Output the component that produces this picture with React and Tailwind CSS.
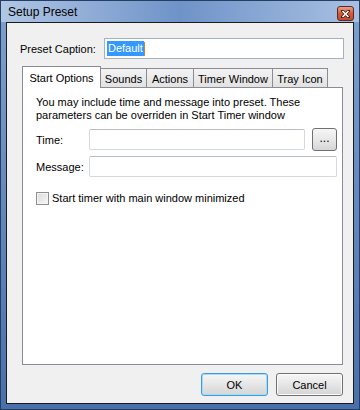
const font = { fontFamily: '"Liberation Sans", Arial, sans-serif' };

function Tab({ label, width, active }) {
  if (active) {
    return (
      <div
        className={`${width} h-[22px] -mb-px mr-[-1px] relative z-10 bg-white border border-b-0 border-[#898c95] flex items-start justify-center pt-[4px] text-[11px] leading-[14px] text-black whitespace-nowrap`}
      >
        {label}
      </div>
    );
  }
  return (
    <div
      className={`${width} h-[19px] mr-[-1px] border border-b-0 border-[#898c95] bg-linear-to-b from-[#f3f3f3] to-[#e2e2e2] flex items-start justify-center pt-[3px] text-[11px] leading-[14px] text-black whitespace-nowrap`}
    >
      {label}
    </div>
  );
}

function WinButton({ children, primary }) {
  return (
    <button
      className={`w-[67px] h-[23px] rounded-[3px] border text-[11px] leading-[14px] text-black bg-linear-to-b from-[#f6f6f6] via-[#e6e6e6] to-[#d4d4d4] ${
        primary ? "border-[#3c9ddb] shadow-[inset_0_0_0_1px_#a9dbf6]" : "border-[#707070] shadow-[inset_0_0_0_1px_#fbfbfb]"
      }`}
    >
      {children}
    </button>
  );
}

export default function App() {
  return (
    <div
      className="w-[360px] h-[410px] border border-[#253e63] bg-[#4f73ac] flex flex-col text-[11px]"
      style={font}
    >
      {/* Title bar */}
      <div className="h-[21px] shrink-0 flex items-center justify-between pl-[7px] pr-[5px] bg-linear-to-r from-[#b0c6e4] via-[#6f93c8] to-[#a8c0e2]">
        <span className="text-[12px] leading-[15px] text-black pt-[2px]">Setup Preset</span>
        <div className="w-[17px] h-[15px] mt-[4px] rounded-[3px] border border-[#5a2a20] bg-linear-to-b from-[#e8a08a] via-[#d2583a] to-[#c44b2c] flex items-center justify-center">
          <svg width="9" height="8" viewBox="0 0 9 8">
            <path d="M1.5 1 L7.5 7 M7.5 1 L1.5 7" stroke="#3a1a14" strokeWidth="3" strokeLinecap="square" />
            <path d="M1.5 1 L7.5 7 M7.5 1 L1.5 7" stroke="#ffffff" strokeWidth="1.6" />
          </svg>
        </div>
      </div>

      {/* Frame strip + client area */}
      <div className="flex-1 flex px-[5px] pb-[5px] bg-linear-to-b from-[#7d9dcc] to-[#4a70ab]">
        <div className="flex-1 border border-[#1b1b1b] bg-[#f0f0f0] flex flex-col">
          {/* Caption row */}
          <div className="flex items-center pl-[13px] pt-[15px] pr-[9px]">
            <span className="w-[84px] leading-[14px] text-black whitespace-nowrap">Preset Caption:</span>
            <div className="w-[240px] h-[21px] border border-[#a6b1c2] bg-white flex items-center pl-[2px]">
              <span className="bg-[#3399ff] text-white leading-[15px] px-[1px]">Default</span>
              <span className="w-px h-[14px] bg-[#e07a2c]" />
            </div>
          </div>

          {/* Tabs */}
          <div className="flex flex-col pl-[15px] pr-[10px] pt-[6px]">
            <div className="flex items-end h-[22px]">
              <Tab label="Start Options" width="w-[79px]" active />
              <Tab label="Sounds" width="w-[47px]" />
              <Tab label="Actions" width="w-[48px]" />
              <Tab label="Timer Window" width="w-[80px]" />
              <Tab label="Tray Icon" width="w-[56px]" />
            </div>
            <div className="h-[278px] border border-[#898c95] bg-white flex flex-col pl-[13px] pr-[4px] pt-[8px]">
              <p className="leading-[13px] text-black whitespace-nowrap">
                You may include time and message into preset. These
                <br />
                parameters can be overriden in Start Timer window
              </p>
              <div className="flex items-center mt-[6px]">
                <span className="w-[53px] leading-[14px] text-black">Time:</span>
                <div className="w-[216px] h-[21px] border border-[#d5d8de] border-t-[#b8bcc4] bg-white rounded-[2px]" />
                <button className="ml-[7px] w-[25px] h-[23px] rounded-[3px] border border-[#707070] bg-linear-to-b from-[#f6f6f6] via-[#e8e8e8] to-[#d6d6d6] text-[12px] leading-[10px] text-black pb-[4px]">
                  ...
                </button>
              </div>
              <div className="flex items-center mt-[5px]">
                <span className="w-[53px] leading-[14px] text-black">Message:</span>
                <div className="w-[248px] h-[21px] border border-[#d5d8de] border-t-[#b8bcc4] bg-white rounded-[2px]" />
              </div>
              <label className="flex items-center mt-[14px]">
                <span className="w-[13px] h-[13px] border border-[#8e8f8f] bg-linear-to-br from-[#dcdcdc] to-[#f6f6f6] shadow-[inset_0_0_0_1px_#f4f4f4]" />
                <span className="ml-[3px] leading-[14px] text-black whitespace-nowrap">
                  Start timer with main window minimized
                </span>
              </label>
            </div>
          </div>

          {/* Buttons */}
          <div className="flex justify-end gap-[8px] pr-[10px] pt-[8px]">
            <WinButton primary>OK</WinButton>
            <WinButton>Cancel</WinButton>
          </div>
        </div>
      </div>
    </div>
  );
}
